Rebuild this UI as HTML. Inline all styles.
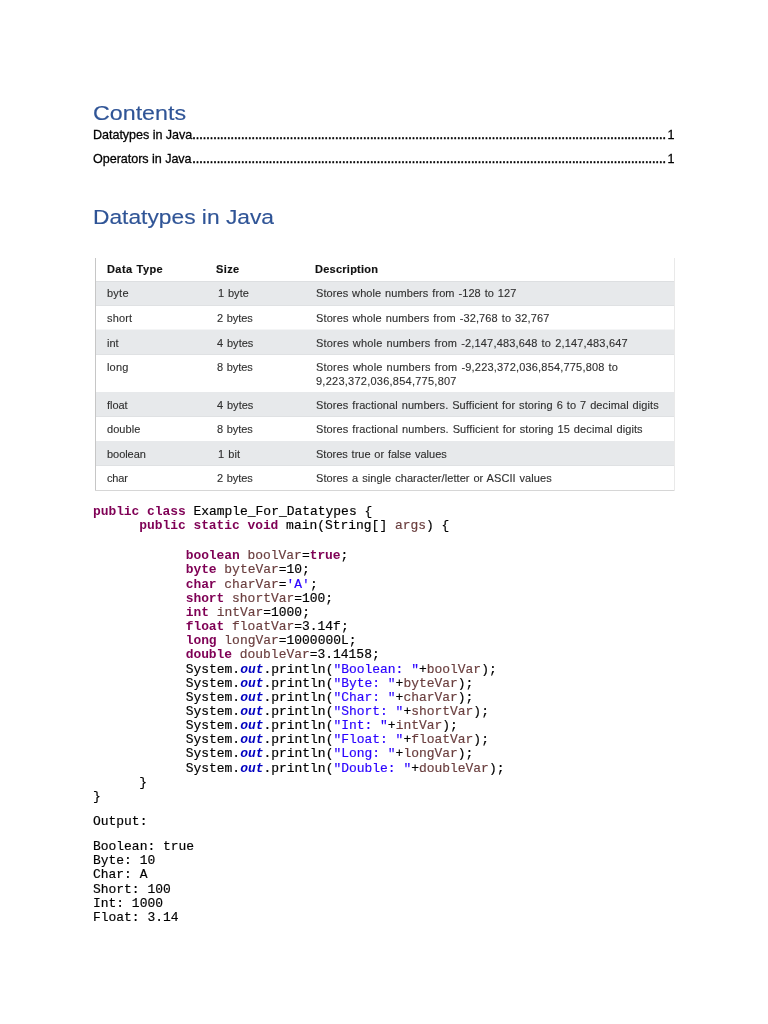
<!DOCTYPE html>
<html>
<head>
<meta charset="utf-8">
<title>Datatypes in Java</title>
<style>
html,body{margin:0;padding:0;background:#fff;font-family:"Liberation Sans",sans-serif;}
body{width:768px;height:1024px;position:relative;overflow:hidden;font-family:"Liberation Sans",sans-serif;color:#000;}
#page{position:absolute;left:0;top:0;width:768px;height:1024px;will-change:transform;}
.abs{position:absolute;white-space:pre;}
.h{color:#2f5496;font-family:"Liberation Sans",sans-serif;font-size:20.5px;line-height:24px;left:93px;transform-origin:0 0;-webkit-text-stroke:0.15px #2f5496;}
.toc{left:93px;width:581.5px;font-size:12.6px;line-height:16px;display:flex;white-space:nowrap;-webkit-text-stroke:0.28px #000;}
.toc .t{letter-spacing:-0.05px;}
.toc .dots{flex:1;overflow:hidden;white-space:nowrap;letter-spacing:-0.016px;-webkit-text-stroke:0.55px #000;margin-right:1.55px;display:flex;justify-content:flex-end;}
.code{font-family:"Liberation Mono",monospace;font-size:12.96px;line-height:14.15px;left:93px;letter-spacing:0px;tab-size:46.35px;-moz-tab-size:46.35px;-webkit-text-stroke:0.18px currentColor;}
.k{color:#7f0055;font-weight:bold;-webkit-text-stroke:0;letter-spacing:-0.06px;}
.v{color:#6a3e3e;}
.s{color:#2a00ff;}
.o{color:#0000c0;font-weight:bold;font-style:italic;-webkit-text-stroke:0;}
#tbl div,#tbl span{position:absolute;}
#tbl .g{left:96px;width:578.5px;background:#e7e9eb;}
#tbl .sep{left:96px;width:578.5px;height:1px;background:#dfe1e3;}
#tbl .bl{left:95px;top:258px;width:1px;height:233px;background:#c6c6c6;}
#tbl .bb{left:95px;top:490px;width:580px;height:1px;background:#d6d6d6;}
#tbl .br{left:674px;top:258px;width:1px;height:233px;background:#e9e9e9;}
#tbl .tt{white-space:pre;font-size:10.2px;line-height:12px;color:#303030;transform:scaleX(1.08);transform-origin:0 0;-webkit-text-stroke:0.12px #303030;}
#tbl .b{font-weight:bold;color:#111;-webkit-text-stroke:0.15px #111;}
</style>
</head>
<body>
<div id="page">
<div class="abs h" style="top:101px;transform:scaleX(1.134)">Contents</div>
<div class="abs toc" style="top:127px;"><span class="t">Datatypes in Java</span><span class="dots"><span>......................................................................................................................................................</span></span><span>1</span></div>
<div class="abs toc" style="top:150.6px;"><span class="t">Operators in Java</span><span class="dots"><span>......................................................................................................................................................</span></span><span>1</span></div>
<div class="abs h" style="top:204.5px;transform:scaleX(1.111)">Datatypes in Java</div>

<div id="tbl">
<div class="g" style="top:281px;height:25px"></div>
<div class="sep" style="top:305px"></div>
<div class="g" style="top:330px;height:25px"></div>
<div class="sep" style="top:354px"></div>
<div class="g" style="top:392px;height:25px"></div>
<div class="sep" style="top:416px"></div>
<div class="g" style="top:441px;height:25px"></div>
<div class="sep" style="top:465px"></div>
<div class="g" style="top:329px;height:1px;background:#f4f5f6"></div>
<div class="sep" style="top:281px;background:#dddfe1"></div>
<div class="bl"></div><div class="bb"></div><div class="br"></div>
<span id="s0" class="tt b" style="left:106.69px;top:264.38px;letter-spacing:0.397px;word-spacing:0.5px">Data Type</span>
<span id="s1" class="tt b" style="left:216.42px;top:264.38px;letter-spacing:0.347px;word-spacing:0.5px">Size</span>
<span id="s2" class="tt b" style="left:315.42px;top:264.38px;letter-spacing:0.230px;word-spacing:0.5px">Description</span>
<span id="s3" class="tt" style="left:106.69px;top:288.43px;letter-spacing:0.220px;word-spacing:0.7px">byte</span>
<span id="s4" class="tt" style="left:217.96px;top:288.43px;letter-spacing:0.020px;word-spacing:0.7px">1 byte</span>
<span id="s5" class="tt" style="left:315.68px;top:288.43px;letter-spacing:0.066px;word-spacing:0.7px">Stores whole numbers from -128 to 127</span>
<span id="s6" class="tt" style="left:106.69px;top:313.33px;letter-spacing:0.126px;word-spacing:0.7px">short</span>
<span id="s7" class="tt" style="left:217.18px;top:313.33px;letter-spacing:-0.080px;word-spacing:0.7px">2 bytes</span>
<span id="s8" class="tt" style="left:315.68px;top:313.33px;letter-spacing:0.109px;word-spacing:0.7px">Stores whole numbers from -32,768 to 32,767</span>
<span id="s9" class="tt" style="left:106.69px;top:337.63px;letter-spacing:0.020px;word-spacing:0.7px">int</span>
<span id="s10" class="tt" style="left:217.20px;top:337.63px;letter-spacing:0.019px;word-spacing:0.7px">4 bytes</span>
<span id="s11" class="tt" style="left:315.68px;top:337.63px;letter-spacing:0.162px;word-spacing:0.7px">Stores whole numbers from -2,147,483,648 to 2,147,483,647</span>
<span id="s12" class="tt" style="left:106.69px;top:362.23px;letter-spacing:0.153px;word-spacing:0.7px">long</span>
<span id="s13" class="tt" style="left:217.18px;top:362.23px;letter-spacing:-0.080px;word-spacing:0.7px">8 bytes</span>
<span id="s14" class="tt" style="left:315.68px;top:362.23px;letter-spacing:0.173px;word-spacing:0.7px">Stores whole numbers from -9,223,372,036,854,775,808 to</span>
<span id="s15" class="tt" style="left:315.68px;top:376.23px;letter-spacing:0.227px;word-spacing:0.7px">9,223,372,036,854,775,807</span>
<span id="s16" class="tt" style="left:106.69px;top:400.23px;letter-spacing:-0.036px;word-spacing:0.7px">float</span>
<span id="s17" class="tt" style="left:217.20px;top:400.23px;letter-spacing:0.019px;word-spacing:0.7px">4 bytes</span>
<span id="s18" class="tt" style="left:315.68px;top:400.23px;letter-spacing:0.084px;word-spacing:0.7px">Stores fractional numbers. Sufficient for storing 6 to 7 decimal digits</span>
<span id="s19" class="tt" style="left:106.69px;top:424.23px;letter-spacing:0.060px;word-spacing:0.7px">double</span>
<span id="s20" class="tt" style="left:217.18px;top:424.23px;letter-spacing:-0.080px;word-spacing:0.7px">8 bytes</span>
<span id="s21" class="tt" style="left:315.68px;top:424.23px;letter-spacing:0.099px;word-spacing:0.7px">Stores fractional numbers. Sufficient for storing 15 decimal digits</span>
<span id="s22" class="tt" style="left:106.69px;top:449.03px;letter-spacing:-0.048px;word-spacing:0.7px">boolean</span>
<span id="s23" class="tt" style="left:217.96px;top:449.03px;letter-spacing:0.120px;word-spacing:0.7px">1 bit</span>
<span id="s24" class="tt" style="left:315.68px;top:449.03px;letter-spacing:-0.003px;word-spacing:0.7px">Stores true or false values</span>
<span id="s25" class="tt" style="left:106.69px;top:473.43px;letter-spacing:-0.179px;word-spacing:0.7px">char</span>
<span id="s26" class="tt" style="left:217.18px;top:473.43px;letter-spacing:-0.080px;word-spacing:0.7px">2 bytes</span>
<span id="s27" class="tt" style="left:315.68px;top:473.43px;letter-spacing:0.060px;word-spacing:0.7px">Stores a single character/letter or ASCII values</span>
</div>

<div class="abs code" style="top:505.07px;"><span class="k">public</span> <span class="k">class</span> Example_For_Datatypes {
	<span class="k">public</span> <span class="k">static</span> <span class="k">void</span> main(String[] <span class="v">args</span>) {</div>
<div class="abs code" style="top:549.27px;">		<span class="k">boolean</span> <span class="v">boolVar</span>=<span class="k">true</span>;
		<span class="k">byte</span> <span class="v">byteVar</span>=10;
		<span class="k">char</span> <span class="v">charVar</span>=<span class="s">&#39;A&#39;</span>;
		<span class="k">short</span> <span class="v">shortVar</span>=100;
		<span class="k">int</span> <span class="v">intVar</span>=1000;
		<span class="k">float</span> <span class="v">floatVar</span>=3.14f;
		<span class="k">long</span> <span class="v">longVar</span>=1000000L;
		<span class="k">double</span> <span class="v">doubleVar</span>=3.14158;
		System.<span class="o">out</span>.println(<span class="s">"Boolean: "</span>+<span class="v">boolVar</span>);
		System.<span class="o">out</span>.println(<span class="s">"Byte: "</span>+<span class="v">byteVar</span>);
		System.<span class="o">out</span>.println(<span class="s">"Char: "</span>+<span class="v">charVar</span>);
		System.<span class="o">out</span>.println(<span class="s">"Short: "</span>+<span class="v">shortVar</span>);
		System.<span class="o">out</span>.println(<span class="s">"Int: "</span>+<span class="v">intVar</span>);
		System.<span class="o">out</span>.println(<span class="s">"Float: "</span>+<span class="v">floatVar</span>);
		System.<span class="o">out</span>.println(<span class="s">"Long: "</span>+<span class="v">longVar</span>);
		System.<span class="o">out</span>.println(<span class="s">"Double: "</span>+<span class="v">doubleVar</span>);
	}
}</div>
<div class="abs code" style="top:814.97px;">Output:</div>
<div class="abs code" style="top:839.95px;line-height:14.2px">Boolean: true
Byte: 10
Char: A
Short: 100
Int: 1000
Float: 3.14</div>
</div>
</body>
</html>
